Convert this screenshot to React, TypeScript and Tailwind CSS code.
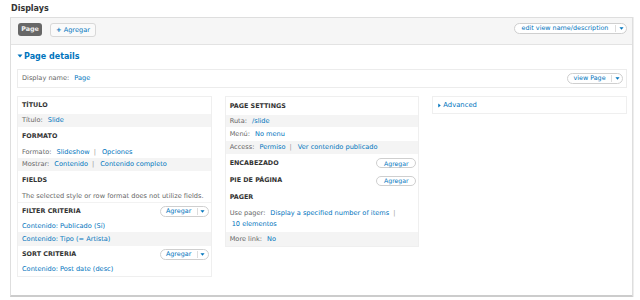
import React from "react";

const Caret = ({ dir = "down", className = "" }: { dir?: "down" | "right"; className?: string }) => (
  <svg viewBox="0 0 6 6" className={className} fill="currentColor">
    {dir === "down" ? <path d="M0.5 1.5 H5.5 L3 4.5 Z" /> : <path d="M1.5 0.5 V5.5 L4.5 3 Z" />}
  </svg>
);

const Link = ({ children }: { children: React.ReactNode }) => (
  <span className="text-[#0074bd]">{children}</span>
);

const Sep = () => <span className="ml-[4px] mr-[6px] text-[#999]">|</span>;

const DropButton = ({ label, width }: { label: string; width: string }) => (
  <div
    className={`flex h-[11px] items-center rounded-full border border-[#cfcfcf] bg-white text-[6.4px] text-[#0074bd] ${width}`}
  >
    <span className="flex-1 text-center">{label}</span>
    <span className="flex h-[7px] w-[11px] items-center justify-center border-l border-[#ddd]">
      <Caret className="h-[5px] w-[5px]" />
    </span>
  </div>
);

const PlainButton = ({ label }: { label: string }) => (
  <div className="flex h-[10px] w-[40px] items-center justify-center rounded-full border border-[#cfcfcf] bg-white text-[6.2px] text-[#0074bd]">
    {label}
  </div>
);

const Head = ({ title, h, right }: { title: string; h: string; right?: React.ReactNode }) => (
  <div className={`flex items-center justify-between pl-[4px] pr-[2px] ${h}`}>
    <span className="text-[6.4px] font-bold text-[#333]">{title}</span>
    {right}
  </div>
);

const Row = ({ children, h, gray }: { children: React.ReactNode; h: string; gray?: boolean }) => (
  <div className={`flex items-center pl-[4px] whitespace-nowrap ${h} ${gray ? "bg-[#f4f4f4]" : ""}`}>
    {children}
  </div>
);

const Label = ({ children }: { children: React.ReactNode }) => (
  <span className="mr-[5px] text-[#666]">{children}</span>
);

export default function App() {
  return (
    <div className="h-[300px] w-[640px] overflow-hidden bg-white font-['DejaVu_Sans',sans-serif] text-[6.6px] leading-[9px] text-[#555]">
      <div className="h-[17px] pl-[11px] pt-[4px] text-[8px] font-bold leading-[10px] text-[#333]">Displays</div>

      <div className="ml-[10px] h-[280px] w-[623px] border border-[#dedede] border-b-2 border-b-[#cccccc] shadow-[1px_0_0_#eee]">
        {/* display tabs */}
        <div className="flex h-[27px] items-start gap-[8px] border-b border-[#e3e3e3] bg-[#f6f6f6] pl-[7px] pr-[5px] pt-[5px]">
          <div className="flex h-[13px] w-[24px] items-center justify-center rounded-[3px] bg-[#676767] text-[6.4px] font-bold text-[#f0f0f0]">
            Page
          </div>
          <div className="flex h-[14px] w-[46px] items-center justify-center gap-[2px] rounded-[3px] border border-[#d8d8d8] bg-[#fafafa] text-[6.6px] text-[#0074bd]">
            <span className="font-bold">+</span>
            <span>Agregar</span>
          </div>
          <div className="ml-auto">
            <DropButton label="edit view name/description" width="w-[113px]" />
          </div>
        </div>

        <div className="pl-[6px] pr-[5px]">
          <div className="flex h-[22px] items-center text-[8px] font-bold text-[#0074bd]">
            <Caret className="mr-[1px] h-[6px] w-[6px]" />
            <span>Page details</span>
          </div>

          <div className="mt-[2px] flex h-[19px] items-center justify-between border border-[#ececec] pl-[4px] pr-[3px]">
            <div>
              <Label>Display name:</Label>
              <Link>Page</Link>
            </div>
            <DropButton label="view Page" width="w-[56px]" />
          </div>

          <div className="mt-[8px] grid grid-cols-3 items-start gap-x-[13px]">
            {/* column 1 */}
            <div className="border border-[#efefef]">
              <Head title="TÍTULO" h="h-[17px]" />
              <Row h="h-[13px]" gray>
                <Label>Título:</Label>
                <Link>Slide</Link>
              </Row>
              <Head title="FORMATO" h="h-[19px]" />
              <Row h="h-[12px]">
                <Label>Formato:</Label>
                <Link>Slideshow</Link>
                <Sep />
                <Link>Opciones</Link>
              </Row>
              <Row h="h-[13px]" gray>
                <Label>Mostrar:</Label>
                <Link>Contenido</Link>
                <Sep />
                <Link>Contenido completo</Link>
              </Row>
              <Head title="FIELDS" h="h-[19px]" />
              <Row h="h-[12px]">
                <span className="text-[#666]">The selected style or row format does not utilize fields.</span>
              </Row>
              <div className="border-t border-[#f2f2f2]">
                <Head title="FILTER CRITERIA" h="h-[17px]" right={<DropButton label="Agregar" width="w-[49px]" />} />
              </div>
              <Row h="h-[12px]">
                <Link>Contenido: Publicado (Sí)</Link>
              </Row>
              <Row h="h-[14px]" gray>
                <Link>Contenido: Tipo (= Artista)</Link>
              </Row>
              <Head title="SORT CRITERIA" h="h-[17px]" right={<DropButton label="Agregar" width="w-[49px]" />} />
              <Row h="h-[13px]">
                <Link>Contenido: Post date (desc)</Link>
              </Row>
            </div>

            {/* column 2 */}
            <div className="border border-[#efefef]">
              <Head title="PAGE SETTINGS" h="h-[18px]" />
              <Row h="h-[12px]" gray>
                <Label>Ruta:</Label>
                <Link>/slide</Link>
              </Row>
              <Row h="h-[14px]">
                <Label>Menú:</Label>
                <Link>No menu</Link>
              </Row>
              <Row h="h-[13px]" gray>
                <Label>Access:</Label>
                <Link>Permiso</Link>
                <Sep />
                <Link>Ver contenido publicado</Link>
              </Row>
              <Head title="ENCABEZADO" h="h-[18px]" right={<PlainButton label="Agregar" />} />
              <Head title="PIE DE PÁGINA" h="h-[17px]" right={<PlainButton label="Agregar" />} />
              <Head title="PAGER" h="h-[17px]" />
              <div className="pl-[4px] pt-[2px] pb-[2px] leading-[11px]">
                <div className="whitespace-nowrap">
                  <Label>Use pager:</Label>
                  <Link>Display a specified number of items</Link>
                  <span className="ml-[4px] text-[#999]">|</span>
                </div>
                <div className="pl-[2px]">
                  <Link>10 elementos</Link>
                </div>
              </div>
              <Row h="h-[14px]" gray>
                <Label>More link:</Label>
                <Link>No</Link>
              </Row>
            </div>

            {/* column 3 */}
            <div className="flex h-[18px] items-center border border-[#efefef] pl-[4px] text-[6.8px] text-[#0074bd]">
              <Caret dir="right" className="h-[5px] w-[5px]" />
              <span className="ml-[1px]">Advanced</span>
            </div>
          </div>
        </div>
      </div>
    </div>
  );
}
